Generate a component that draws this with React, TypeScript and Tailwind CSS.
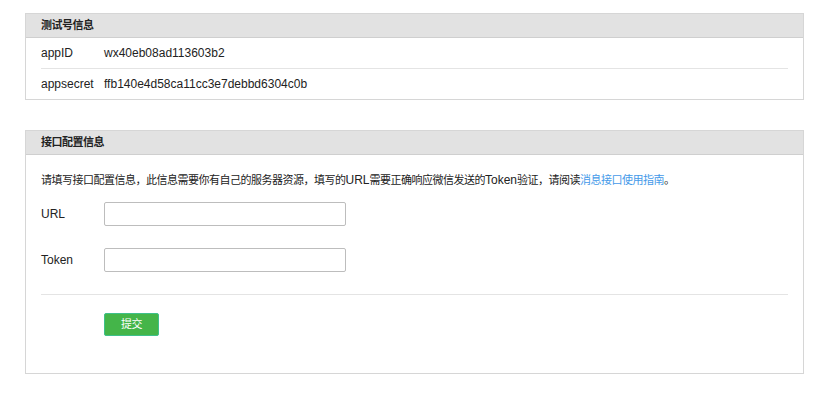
export default function App() {
  const font = {
    fontFamily: '"Liberation Sans", "Noto Sans CJK SC", sans-serif',
  };
  // CJK in the reference runs narrower than latin text of the same size
  const latin = "text-[12px] tracking-normal";

  return (
    <div
      className="min-h-[393px] w-[835px] bg-white pl-[25px] pt-[13px] text-[11px] tracking-[-0.5px] text-[#222]"
      style={font}
    >
      {/* 测试号信息 */}
      <section className="w-[779px] border border-[#d6d6d6]">
        <div className="flex h-[24px] items-center border-b border-[#cfcfcf] bg-[#e2e2e2] px-[15px] font-bold">
          测试号信息
        </div>
        <div className={`px-[15px] ${latin}`}>
          <div className="flex h-[31px] items-center border-b border-[#e4e4e4]">
            <span className="w-[63px]">appID</span>
            <span>wx40eb08ad113603b2</span>
          </div>
          <div className="flex h-[30px] items-center">
            <span className="w-[63px]">appsecret</span>
            <span>ffb140e4d58ca11cc3e7debbd6304c0b</span>
          </div>
        </div>
      </section>

      {/* 接口配置信息 */}
      <section className="mt-[30px] w-[779px] border border-[#d6d6d6]">
        <div className="flex h-[24px] items-center border-b border-[#cfcfcf] bg-[#e2e2e2] px-[15px] font-bold">
          接口配置信息
        </div>
        <div className="px-[15px] pb-[37px] pt-[17px]">
          <p className="leading-[16px]">
            请填写接口配置信息，此信息需要你有自己的服务器资源，填写的
            <span className={latin}>URL</span>
            需要正确响应微信发送的
            <span className={latin}>Token</span>
            验证，请阅读
            <a className="text-[#459ae9]">消息接口使用指南</a>。
          </p>
          <div className={`mt-[14px] flex flex-col gap-[22px] ${latin}`}>
            <div className="flex items-center">
              <span className="w-[63px]">URL</span>
              <input className="h-[24px] w-[242px] rounded-[2px] border border-[#bdbdbd] bg-white px-2 outline-none" />
            </div>
            <div className="flex items-center">
              <span className="w-[63px]">Token</span>
              <input className="h-[24px] w-[242px] rounded-[2px] border border-[#bdbdbd] bg-white px-2 outline-none" />
            </div>
          </div>
          <div className="mt-[22px] border-t border-[#e4e4e4] pl-[63px] pt-[18px]">
            <button className="flex h-[23px] w-[55px] items-center justify-center rounded-[2px] border border-[#3ec08a] bg-[#44b549] text-[11px] text-white">
              提交
            </button>
          </div>
        </div>
      </section>
    </div>
  );
}
